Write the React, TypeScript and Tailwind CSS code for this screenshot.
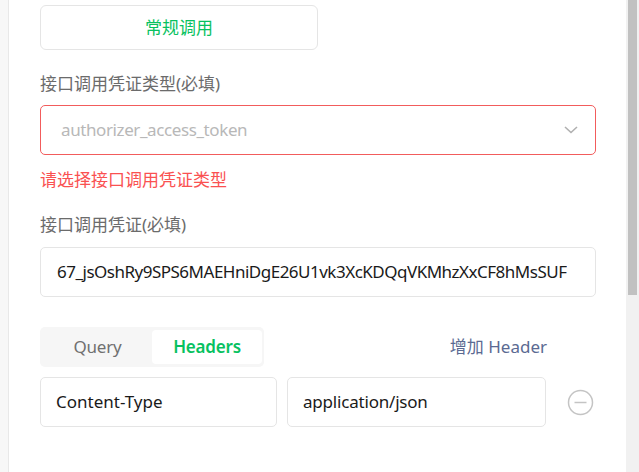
import React from "react";

export default function App() {
  const font = { fontFamily: '"Noto Sans", "Noto Sans CJK SC", sans-serif' };
  return (
    <div className="flex h-[472px] w-[639px] overflow-hidden bg-white" style={font}>
      <div className="w-[8px] shrink-0 border-r border-[#e8e8e8] bg-[#f7f7f7] box-content" />
      <div className="flex min-w-0 flex-1 flex-col pl-[31px] pr-[30px] text-[17px]">
        <button className="mt-[5px] flex h-[45px] w-[278px] items-center justify-center rounded-[6px] border border-[#e5e5e5] bg-white text-[17px] text-[#07c160]">
          常规调用
        </button>
        <div className="mt-[22px] h-[24px] leading-[24px] text-[#6b6b6b]">接口调用凭证类型(必填)</div>
        <div className="mt-[9px] flex h-[50px] items-center justify-between rounded-[5px] border border-[#f25c5c] pl-[20px] pr-[17px]">
          <span className="tracking-[-0.4px] text-[#b8b8b8]">authorizer_access_token</span>
          <svg width="14" height="8" viewBox="0 0 14 8" fill="none">
            <path d="M1 1l6 5.5L13 1" stroke="#b0b0b0" strokeWidth="1.6" />
          </svg>
        </div>
        <div className="mt-[13px] h-[24px] leading-[24px] text-[#fa5151]">请选择接口调用凭证类型</div>
        <div className="mt-[21px] h-[24px] leading-[24px] text-[#6b6b6b]">接口调用凭证(必填)</div>
        <div className="mt-[10px] flex h-[50px] items-center overflow-hidden whitespace-nowrap rounded-[5px] border border-[#e5e5e5] pl-[16px] pr-[15px] text-[#1a1a1a]">
          <span className="overflow-hidden tracking-[-0.5px]">67_jsOshRy9SPS6MAEHniDgE26U1vk3XcKDQqVKMhzXxCF8hMsSUF</span>
        </div>
        <div className="mt-[30px] flex h-[40px] items-center">
          <div className="flex h-[40px] w-[224px] items-center rounded-[5px] bg-[#f6f6f6] p-[3px] pr-[2px]">
            <div className="flex h-full flex-1 items-center justify-center tracking-[-0.2px] text-[#707070]">Query</div>
            <div className="flex h-full w-[110px] items-center justify-center rounded-[4px] bg-white font-semibold tracking-[-0.2px] text-[#07c160]">
              Headers
            </div>
          </div>
          <div className="flex-1" />
          <div className="mr-[49px] text-[#5b6a92]">增加 Header</div>
        </div>
        <div className="mt-[10px] flex items-center">
          <div className="flex h-[50px] w-[237px] items-center rounded-[5px] border border-[#e5e5e5] pl-[15px] text-[#1a1a1a]">
            Content-Type
          </div>
          <div className="ml-[10px] flex h-[50px] w-[259px] items-center rounded-[5px] border border-[#e5e5e5] pl-[15px] tracking-[-0.2px] text-[#1a1a1a]">
            application/json
          </div>
          <div className="flex flex-1 items-center justify-end pr-[2px]">
            <svg width="27" height="27" viewBox="0 0 27 27" fill="none">
              <circle cx="13.5" cy="13.5" r="12" stroke="#c4c4c4" strokeWidth="1.5" />
              <path d="M7.5 13.5h12" stroke="#c4c4c4" strokeWidth="1.5" />
            </svg>
          </div>
        </div>
      </div>
      <div className="flex w-[13px] shrink-0 flex-col bg-[#f1f1f1] pl-[2px] pr-[2px]">
        <div className="h-[295px] bg-[#c1c1c1]" />
      </div>
    </div>
  );
}
